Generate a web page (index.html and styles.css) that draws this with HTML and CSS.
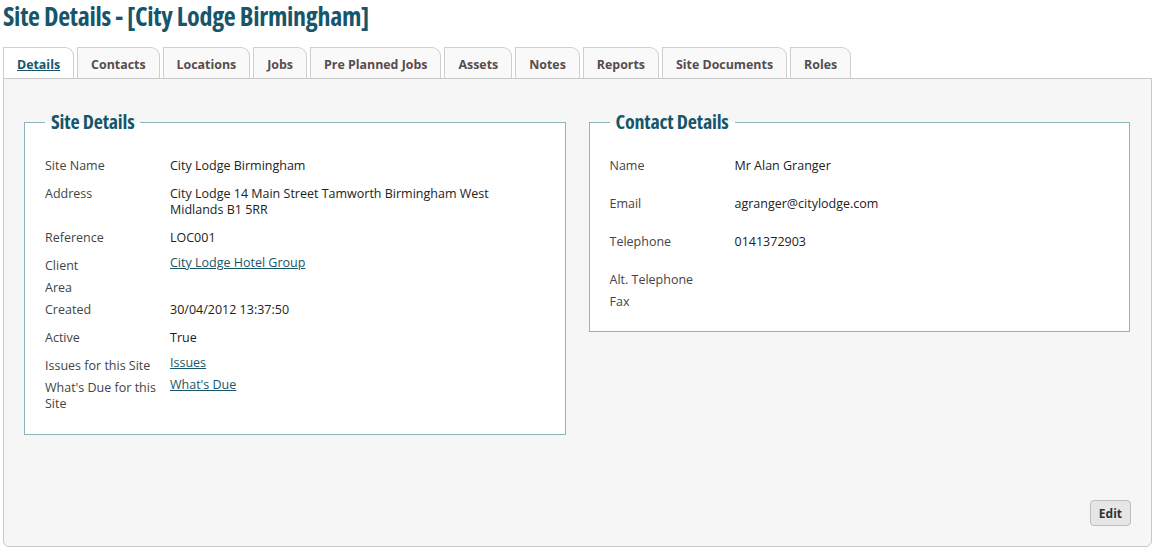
FILE: index.html
```html
<!DOCTYPE html>
<html lang="en">
<head>
    <meta charset="UTF-8">
    <meta name="viewport" content="width=device-width, initial-scale=1.0">
    <title>Site Details - City Lodge Birmingham</title>
    <link rel="stylesheet" href="styles.css">
</head>
<body>
    <h1 class="page-title">Site Details - [City Lodge Birmingham]</h1>

    <ul class="tabs">
        <li class="tab active"><a href="#">Details</a></li>
        <li class="tab"><a href="#">Contacts</a></li>
        <li class="tab"><a href="#">Locations</a></li>
        <li class="tab"><a href="#">Jobs</a></li>
        <li class="tab"><a href="#">Pre Planned Jobs</a></li>
        <li class="tab"><a href="#">Assets</a></li>
        <li class="tab"><a href="#">Notes</a></li>
        <li class="tab"><a href="#">Reports</a></li>
        <li class="tab"><a href="#">Site Documents</a></li>
        <li class="tab"><a href="#">Roles</a></li>
    </ul>

    <div class="panel">
        <div class="columns">
            <fieldset class="details-box site-box">
                <legend>Site Details</legend>
                <div class="row"><span class="label">Site Name</span><span class="value">City Lodge Birmingham</span></div>
                <div class="row"><span class="label">Address</span><span class="value">City Lodge 14 Main Street Tamworth Birmingham West Midlands B1 5RR</span></div>
                <div class="row"><span class="label">Reference</span><span class="value">LOC001</span></div>
                <div class="row link-row"><span class="label">Client</span><span class="value"><a href="#">City Lodge Hotel Group</a></span></div>
                <div class="row tight"><span class="label">Area</span><span class="value"></span></div>
                <div class="row"><span class="label">Created</span><span class="value">30/04/2012 13:37:50</span></div>
                <div class="row"><span class="label">Active</span><span class="value">True</span></div>
                <div class="row link-row"><span class="label">Issues for this Site</span><span class="value"><a href="#">Issues</a></span></div>
                <div class="row link-row last"><span class="label">What's Due for this Site</span><span class="value"><a href="#">What's Due</a></span></div>
            </fieldset>

            <fieldset class="details-box contact-box">
                <legend>Contact Details</legend>
                <div class="row"><span class="label">Name</span><span class="value">Mr Alan Granger</span></div>
                <div class="row"><span class="label">Email</span><span class="value">agranger@citylodge.com</span></div>
                <div class="row"><span class="label">Telephone</span><span class="value">0141372903</span></div>
                <div class="row tight"><span class="label">Alt. Telephone</span><span class="value"></span></div>
                <div class="row last"><span class="label">Fax</span><span class="value"></span></div>
            </fieldset>
        </div>

        <div class="actions">
            <button class="btn">Edit</button>
        </div>
    </div>
</body>
</html>
```

FILE: styles.css
```css
body {
    font-family: "Open Sans", "Noto Sans", sans-serif;
    font-size: 12.5px;
    color: #333;
    margin: 0;
    padding: 0 3px;
    background-color: #fff;
}
.page-title {
    font-family: "Open Sans", sans-serif;
    font-stretch: 75%;
    font-size: 26px;
    font-weight: bold;
    color: #17566a;
    margin: 0;
    line-height: 32px;
    letter-spacing: -0.3px;
}

/* tab strip */
.tabs {
    list-style: none;
    margin: 15px 0 0 0;
    padding: 0;
    display: flex;
    gap: 3px;
}
.tab {
    background-color: #f9f9f9;
    border: 1px solid #cfcfcf;
    border-bottom: none;
    border-radius: 0 9px 0 0;
    height: 30px;
}
.tab a {
    display: block;
    padding: 0 13px;
    line-height: 33px;
    font-size: 12.4px;
    font-weight: bold;
    color: #574c4c;
    text-decoration: none;
}
.tab.active {
    background-color: #fff;
}
.tab.active a {
    color: #17566a;
    text-decoration: underline;
}

/* main panel */
.panel {
    background-color: #f6f6f6;
    border: 1px solid #c8c8c8;
    border-radius: 0 0 6px 6px;
    height: 469px;
    padding: 32px 21px 0 20px;
    box-sizing: border-box;
    display: flex;
    flex-direction: column;
}
.columns {
    display: grid;
    grid-template-columns: 1fr 1fr;
    gap: 23px;
    align-items: start;
}
.details-box {
    background-color: #fff;
    border: 1px solid #8db4b8;
    margin: 0;
    padding: 25px 20px 21px 20px;
    min-width: 0;
}
.site-box {
    padding-bottom: 22px;
}
.details-box legend {
    font-family: "Open Sans", sans-serif;
    font-stretch: 75%;
    font-size: 20px;
    line-height: 22px;
    font-weight: bold;
    color: #17566a;
    padding: 0 6px;
    letter-spacing: -0.2px;
}

.row {
    display: flex;
    line-height: 16px;
    margin-bottom: 12px;
}
.row .label {
    width: 120px;
    padding-right: 5px;
    flex-shrink: 0;
    color: #444;
}
.row .value {
    color: #222;
    max-width: 340px;
}
.row .value a {
    color: #17566a;
}
.row.link-row {
    margin-bottom: 6px;
}
.row.link-row .value {
    margin-top: -3px;
}
.row.tight {
    margin-bottom: 6px;
}
.row.last {
    margin-bottom: 0;
}
.contact-box .row {
    margin-bottom: 22px;
}
.contact-box .row.tight {
    margin-bottom: 6px;
}
.contact-box .row.last {
    margin-bottom: 0;
}

.actions {
    margin-top: auto;
    display: flex;
    justify-content: flex-end;
    padding: 0 0 20px 0;
}
.btn {
    font-family: "Open Sans", "Noto Sans", sans-serif;
    font-size: 12px;
    font-weight: bold;
    color: #333;
    background-color: #e6e6e6;
    border: 1px solid #bdbdbd;
    border-radius: 4px;
    padding: 0 8px;
    height: 26px;
    margin-right: -1px;
    cursor: pointer;
}
```
